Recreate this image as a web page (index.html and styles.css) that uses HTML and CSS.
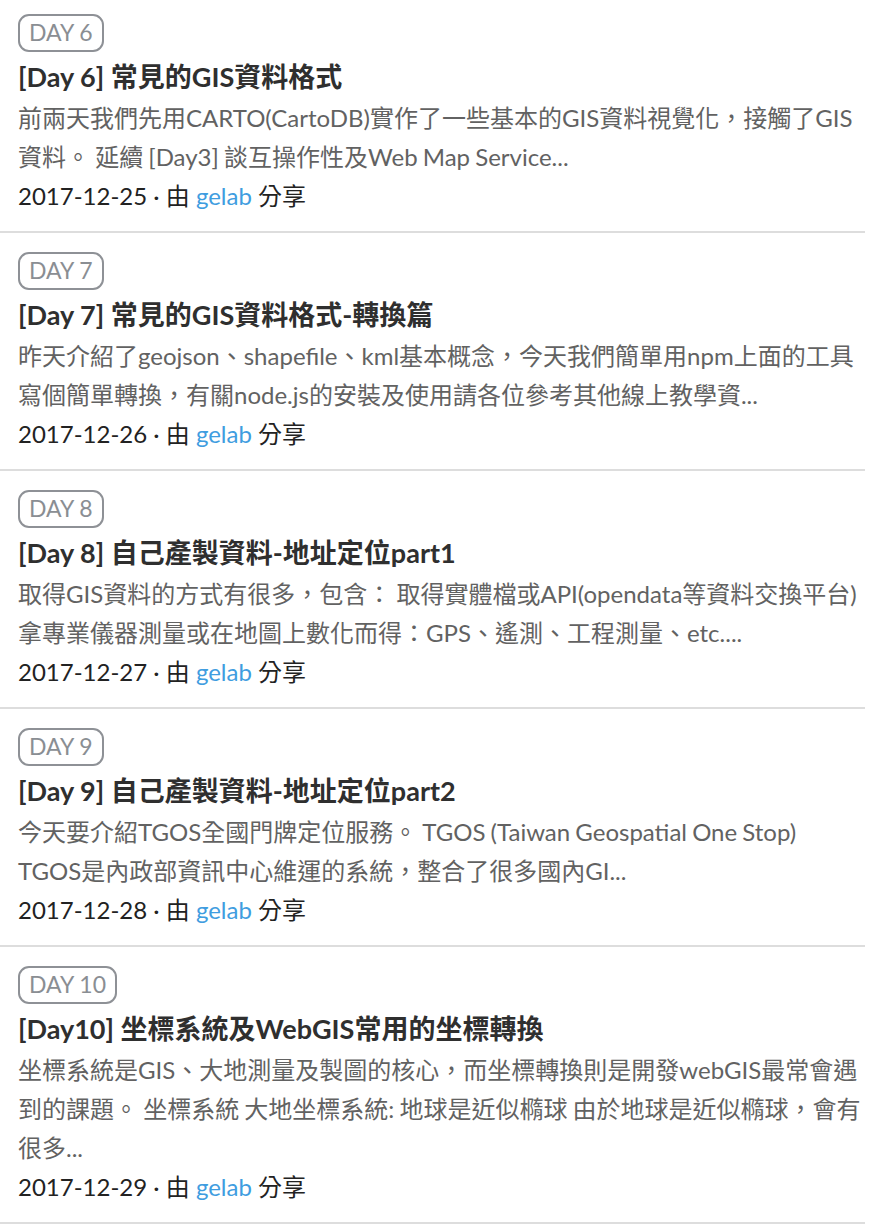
FILE: index.html
```html
<!DOCTYPE html>
<html lang="zh-Hant">
<head>
<meta charset="utf-8">
<title>GIS 系列文章</title>
<link rel="stylesheet" href="styles.css">
</head>
<body>
<ul class="post-list">
  <li class="post">
    <span class="post-badge">DAY 6</span>
    <h3 class="post-title">[Day 6] 常見的GIS資料格式</h3>
    <p class="post-desc">前兩天我們先用CARTO(CartoDB)實作了一些基本的GIS資料視覺化，接觸了GIS資料。 延續 [Day3] 談互操作性及Web Map Service...</p>
    <p class="post-meta">2017-12-25 · 由 <a class="post-author" href="#">gelab</a> 分享</p>
  </li>
  <li class="post">
    <span class="post-badge">DAY 7</span>
    <h3 class="post-title">[Day 7] 常見的GIS資料格式-轉換篇</h3>
    <p class="post-desc">昨天介紹了geojson、shapefile、kml基本概念，今天我們簡單用npm上面的工具寫個簡單轉換，有關node.js的安裝及使用請各位參考其他線上教學資...</p>
    <p class="post-meta">2017-12-26 · 由 <a class="post-author" href="#">gelab</a> 分享</p>
  </li>
  <li class="post">
    <span class="post-badge">DAY 8</span>
    <h3 class="post-title">[Day 8] 自己產製資料-地址定位part1</h3>
    <p class="post-desc">取得GIS資料的方式有很多，包含： 取得實體檔或API(opendata等資料交換平台) 拿專業儀器測量或在地圖上數化而得：GPS、遙測、工程測量、etc....</p>
    <p class="post-meta">2017-12-27 · 由 <a class="post-author" href="#">gelab</a> 分享</p>
  </li>
  <li class="post">
    <span class="post-badge">DAY 9</span>
    <h3 class="post-title">[Day 9] 自己產製資料-地址定位part2</h3>
    <p class="post-desc">今天要介紹TGOS全國門牌定位服務。 TGOS (Taiwan Geospatial One Stop) TGOS是內政部資訊中心維運的系統，整合了很多國內GI...</p>
    <p class="post-meta">2017-12-28 · 由 <a class="post-author" href="#">gelab</a> 分享</p>
  </li>
  <li class="post">
    <span class="post-badge">DAY 10</span>
    <h3 class="post-title">[Day10] 坐標系統及WebGIS常用的坐標轉換</h3>
    <p class="post-desc">坐標系統是GIS、大地測量及製圖的核心，而坐標轉換則是開發webGIS最常會遇到的課題。 坐標系統 大地坐標系統: 地球是近似橢球 由於地球是近似橢球，會有很多...</p>
    <p class="post-meta">2017-12-29 · 由 <a class="post-author" href="#">gelab</a> 分享</p>
  </li>
</ul>
</body>
</html>
```
FILE: styles.css
```css
html, body {
  margin: 0;
  padding: 0;
  background: #ffffff;
}

body {
  font-family: Lato, "Noto Sans CJK TC", sans-serif;
  color: #333333;
}

.post-list {
  list-style: none;
  margin: 0;
  padding: 0;
  width: 865px;
}

.post {
  display: flex;
  flex-direction: column;
  align-items: flex-start;
  padding: 19px 4px 16px 18px;
  border-bottom: 2px solid #dddddd;
}

.post:first-child {
  padding-top: 14px;
}

.post-badge {
  box-sizing: border-box;
  height: 38px;
  padding: 0 9px;
  border: 2px solid #8e9196;
  border-radius: 11px;
  color: #8a8e93;
  font-size: 23px;
  line-height: 33px;
  white-space: nowrap;
}

.post-title {
  margin: 3px 0 0;
  font-size: 27px;
  font-weight: 700;
  line-height: 43px;
  color: #2f2f2f;
}

.post-desc {
  margin: 0;
  font-size: 24px;
  line-height: 39px;
  word-spacing: -1px;
  color: #626262;
}

.post-meta {
  margin: 0;
  font-size: 24px;
  line-height: 39px;
  color: #222222;
}

.post-author {
  color: #3f9de0;
  text-decoration: none;
}
```
